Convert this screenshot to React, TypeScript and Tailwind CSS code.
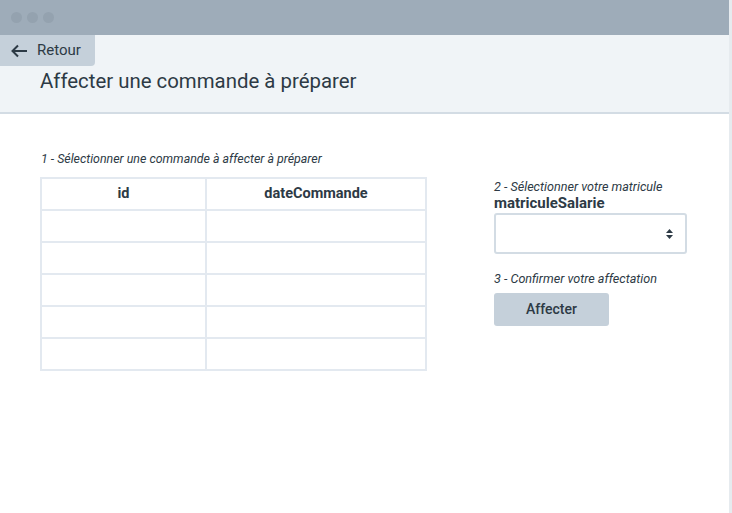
import React from "react";

export default function App() {
  const rows = [0, 1, 2, 3, 4];
  return (
    <div
      className="flex h-[513px] w-[732px] bg-white text-[#2d3a45]"
      style={{ fontFamily: "Roboto, 'Liberation Sans', sans-serif" }}
    >
      <div className="flex flex-1 flex-col">
        <div className="flex h-[35px] items-center gap-[5px] bg-[#9eacb9] pl-[11px]">
          <span className="h-[11px] w-[11px] rounded-full bg-[#94a2af]" />
          <span className="h-[11px] w-[11px] rounded-full bg-[#94a2af]" />
          <span className="h-[11px] w-[11px] rounded-full bg-[#94a2af]" />
        </div>
        <div className="h-[79px] border-b-2 border-[#d3dce4] bg-[#f0f4f7]">
          <div className="flex h-[31px] w-[95px] items-center gap-[9px] rounded-br-[4px] bg-[#c5d0da] pl-[11px] text-[15px]">
            <svg width="17" height="14" viewBox="0 0 17 14" fill="none">
              <path d="M16 7H2M7 1.5L1.5 7L7 12.5" stroke="#2d3a45" strokeWidth="2" />
            </svg>
            <span>Retour</span>
          </div>
          <div className="pl-[40px] pt-[2px] text-[20.4px] leading-[26px]">
            Affecter une commande à préparer
          </div>
        </div>
        <div className="flex pt-[37px]">
          <div className="w-[427px] shrink-0 pl-[40px]">
            <div className="pl-[1px] text-[12.4px] italic leading-[16px]">
              1 - Sélectionner une commande à affecter à préparer
            </div>
            <table className="mt-[10px] w-[387px] border-collapse border-2 border-[#e3e9f0]">
              <thead>
                <tr className="h-[32px]">
                  <th className="w-[165px] border-2 border-[#e3e9f0] text-[14.5px] font-bold">id</th>
                  <th className="border-2 border-[#e3e9f0] text-[14.5px] font-bold">dateCommande</th>
                </tr>
              </thead>
              <tbody>
                {rows.map((r) => (
                  <tr key={r} className="h-[32px]">
                    <td className="border-2 border-[#e3e9f0]" />
                    <td className="border-2 border-[#e3e9f0]" />
                  </tr>
                ))}
              </tbody>
            </table>
          </div>
          <div className="ml-[67px] flex w-[193px] flex-col pt-[28px]">
            <div className="text-[12.6px] italic leading-[15px]">2 - Sélectionner votre matricule</div>
            <div className="text-[15px] font-bold leading-[18px]">matriculeSalarie</div>
            <div className="mt-[1px] flex h-[41px] items-center justify-end rounded-[3px] border-2 border-[#d3dce4] pr-[12px]">
              <svg width="7" height="10" viewBox="0 0 7 10">
                <path d="M3.5 0L7 4H0Z M3.5 10L0 6H7Z" fill="#2d3a45" />
              </svg>
            </div>
            <div className="mt-[17px] text-[12.6px] italic leading-[15px]">3 - Confirmer votre affectation</div>
            <div className="mt-[7px] flex h-[33px] w-[115px] items-center justify-center rounded-[3px] bg-[#c5d0da] text-[14px] font-medium">
              Affecter
            </div>
          </div>
        </div>
      </div>
      <div className="w-[3px] bg-[#e6ebef]" />
    </div>
  );
}
